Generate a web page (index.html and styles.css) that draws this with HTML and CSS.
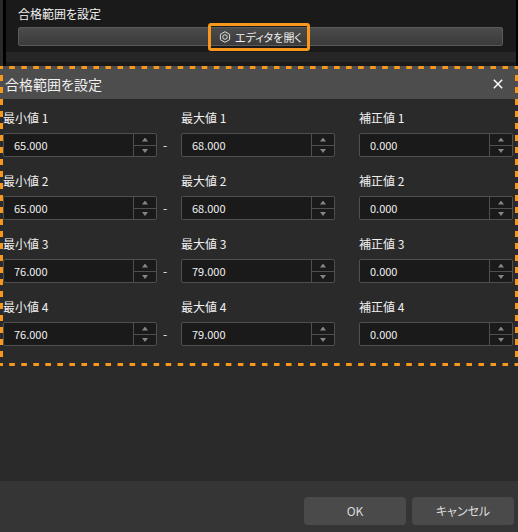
FILE: index.html
```
<!DOCTYPE html>
<html lang="ja">
<head>
    <meta charset="UTF-8">
    <meta name="viewport" content="width=device-width, initial-scale=1.0">
    <title>合格範囲を設定</title>
    <link rel="stylesheet" href="styles.css">
</head>
<body>
    <div class="panel">
        <section class="setting">
            <p class="setting-title">合格範囲を設定</p>
            <button type="button" class="open-editor">
                <span class="open-editor-content">
                    <svg class="icon-nut" viewBox="0 0 12 12" aria-hidden="true">
                        <path d="M6 .7 10.6 3.3V8.7L6 11.3 1.4 8.7V3.3Z"/>
                        <circle cx="6" cy="6" r="2.3"/>
                    </svg>
                    エディタを開く
                </span>
            </button>
        </section>
        <div class="separator"></div>
    </div>

    <div class="dialog" role="dialog" aria-labelledby="dialog-title">
        <div class="marked">
            <header class="dialog-header">
                <h1 id="dialog-title">合格範囲を設定</h1>
                <button type="button" class="close" aria-label="閉じる">
                    <svg viewBox="0 0 10 10" aria-hidden="true"><path d="M.8.8 9.2 9.2M9.2.8.8 9.2"/></svg>
                </button>
            </header>
            <form class="ranges" id="ranges"></form>
        </div>
        <footer class="dialog-footer">
            <button type="button" class="action">OK</button>
            <button type="button" class="action">キャンセル</button>
        </footer>
    </div>
    <script src="script.js"></script>
</body>
</html>
```
FILE: styles.css
```
* {
    box-sizing: border-box;
}

body {
    margin: 0;
    min-height: 100vh;
    display: flex;
    flex-direction: column;
    background-color: #000;
    color: #f0f0f0;
    font-family: "Noto Sans CJK JP", sans-serif;
    font-size: 12px;
    line-height: 18px;
    font-feature-settings: "palt";
}

button,
input {
    font: inherit;
    font-feature-settings: inherit;
    color: inherit;
    margin: 0;
    padding: 0;
}

/* Painel de fundo */
.panel {
    margin-right: 2px;
    padding-bottom: 4px;
    border-left: 3px solid #2a2a2a;
    box-shadow: inset 3px 0 #000;
    background-color: #1a1a1a;
}

.setting {
    padding: 5px 13px 6px 15px;
}

.setting-title {
    margin: 0 0 4px;
}

.open-editor {
    display: flex;
    justify-content: center;
    align-items: center;
    width: 100%;
    height: 19px;
    border: 1px solid #5a5a5a;
    border-radius: 2px;
    background: linear-gradient(#4b4b4b, #3b3b3b);
    font-size: 11px;
}

.open-editor-content {
    position: relative;
    display: flex;
    align-items: center;
    gap: 4px;
}

.open-editor-content::after {
    content: "";
    position: absolute;
    inset: -5px -8px -5px -11px;
    border: 3px solid #f7981d;
    border-radius: 3px;
}

.icon-nut {
    width: 12px;
    height: 12px;
    fill: none;
    stroke: #dcdcdc;
}

.separator {
    height: 10px;
    margin-left: 3px;
    background-color: #262626;
}

/* Dialog */
.dialog {
    flex: 1;
    display: flex;
    flex-direction: column;
    background-color: #2a2a2a;
}

.marked {
    position: relative;
}

.marked::after {
    --across: linear-gradient(90deg, #f7981d 3px, transparent 3px 9px, #f7981d 9px);
    --down: linear-gradient(#f7981d 3px, transparent 3px 9px, #f7981d 9px);
    content: "";
    position: absolute;
    inset: 0;
    pointer-events: none;
    background:
        var(--across) left top / 12px 3px round no-repeat,
        var(--across) left bottom / 12px 3px round no-repeat,
        var(--down) left top / 3px 12px no-repeat round,
        var(--down) right top / 3px 12px no-repeat round;
}

.dialog-header {
    display: flex;
    justify-content: space-between;
    align-items: center;
    height: 33px;
    padding: 2px 15px 0 5px;
    background-color: #4d4d4d;
}

.dialog-header h1 {
    margin: 0;
    font-size: 14px;
    font-weight: 400;
}

.close {
    display: flex;
    padding: 0;
    border: none;
    background: none;
}

.close svg {
    width: 10px;
    height: 10px;
    fill: none;
    stroke: #fff;
    stroke-width: 1.5;
}

.ranges {
    display: grid;
    grid-template-columns: 1fr 24px 1fr 24px 1fr;
    row-gap: 15px;
    padding: 10px 5px 20px 3px;
}

.field label {
    display: block;
    margin-bottom: 6px;
}

.dash {
    align-self: end;
    height: 24px;
    line-height: 24px;
    padding-left: 6px;
}

.spin {
    display: grid;
    grid-template-columns: 1fr 23px;
    grid-template-rows: 1fr 1fr;
    height: 24px;
    border: 1px solid #4f4f4f;
    border-radius: 2px;
    background-color: #1a1a1a;
}

.spin input {
    grid-row: 1 / 3;
    width: 100%;
    min-width: 0;
    padding-left: 10px;
    border: none;
    outline: none;
    background: none;
    font-size: 11px;
    appearance: textfield;
}

.spin input::-webkit-inner-spin-button {
    appearance: none;
}

.step {
    display: flex;
    justify-content: center;
    align-items: center;
    border: none;
    border-left: 1px solid #4f4f4f;
    background: none;
}

.step.down {
    border-top: 1px solid #4f4f4f;
}

.step::before {
    content: "";
    width: 6px;
    height: 4px;
    background-color: #858585;
    clip-path: polygon(50% 0, 100% 100%, 0 100%);
}

.step.down::before {
    clip-path: polygon(0 0, 100% 0, 50% 100%);
}

.dialog-footer {
    display: flex;
    justify-content: flex-end;
    gap: 6px;
    margin-top: auto;
    padding: 16px 4px 7px;
    background-color: #353535;
}

.action {
    width: 102px;
    height: 28px;
    border: none;
    border-radius: 4px;
    background-color: #4a4a4a;
    color: #dcdcdc;
}
```
FILE: script.js
```
const faixas = [
    { min: "65.000", max: "68.000", correcao: "0.000" },
    { min: "65.000", max: "68.000", correcao: "0.000" },
    { min: "76.000", max: "79.000", correcao: "0.000" },
    { min: "76.000", max: "79.000", correcao: "0.000" }
];

function campo(id, rotulo, valor) {
    return `
        <div class="field">
            <label for="${id}">${rotulo}</label>
            <div class="spin">
                <input type="number" id="${id}" step="0.001" value="${valor}">
                <button type="button" class="step up" aria-label="${rotulo} +"></button>
                <button type="button" class="step down" aria-label="${rotulo} -"></button>
            </div>
        </div>`;
}

const form = document.getElementById("ranges");

form.innerHTML = faixas.map((f, i) => {
    const n = i + 1;
    return campo("min" + n, "最小値 " + n, f.min)
        + `<span class="dash">-</span>`
        + campo("max" + n, "最大値 " + n, f.max)
        + `<span></span>`
        + campo("cor" + n, "補正値 " + n, f.correcao);
}).join("");

form.addEventListener("click", e => {
    const botao = e.target.closest(".step");
    if (!botao) return;
    const input = botao.parentElement.querySelector("input");
    const passo = botao.classList.contains("up") ? 0.001 : -0.001;
    input.value = (Number(input.value) + passo).toFixed(3);
});
```
